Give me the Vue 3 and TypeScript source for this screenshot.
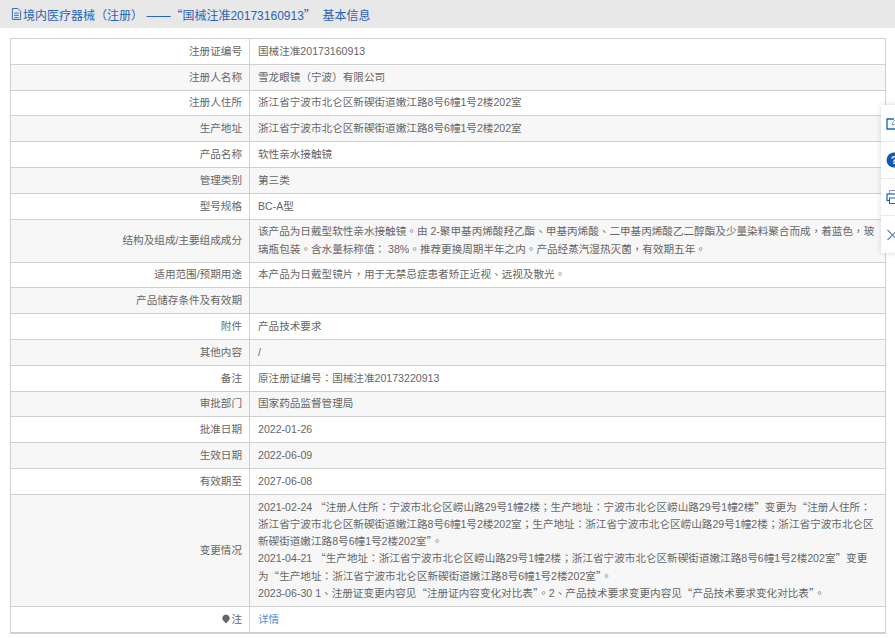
<script setup lang="ts">
interface Row { label: string; value?: string; lines?: string[]; link?: string; tip?: boolean }
const rows: Row[] = [
  { label: '注册证编号', value: '国械注准20173160913' },
  { label: '注册人名称', value: '雪龙眼镜（宁波）有限公司' },
  { label: '注册人住所', value: '浙江省宁波市北仑区新碶街道嫩江路8号6幢1号2楼202室' },
  { label: '生产地址', value: '浙江省宁波市北仑区新碶街道嫩江路8号6幢1号2楼202室' },
  { label: '产品名称', value: '软性亲水接触镜' },
  { label: '管理类别', value: '第三类' },
  { label: '型号规格', value: 'BC-A型' },
  { label: '结构及组成/主要组成成分', value: '该产品为日戴型软性亲水接触镜。由 2-聚甲基丙烯酸羟乙酯、甲基丙烯酸、二甲基丙烯酸乙二醇酯及少量染料聚合而成，着蓝色，玻璃瓶包装。含水量标称值： 38%。推荐更换周期半年之内。产品经蒸汽湿热灭菌，有效期五年。' },
  { label: '适用范围/预期用途', value: '本产品为日戴型镜片，用于无禁忌症患者矫正近视、远视及散光。' },
  { label: '产品储存条件及有效期', value: '' },
  { label: '附件', value: '产品技术要求' },
  { label: '其他内容', value: '/' },
  { label: '备注', value: '原注册证编号：国械注准20173220913' },
  { label: '审批部门', value: '国家药品监督管理局' },
  { label: '批准日期', value: '2022-01-26' },
  { label: '生效日期', value: '2022-06-09' },
  { label: '有效期至', value: '2027-06-08' },
  { label: '变更情况', lines: [
    '2021-02-24 “注册人住所：宁波市北仑区崂山路29号1幢2楼；生产地址：宁波市北仑区崂山路29号1幢2楼”变更为“注册人住所：浙江省宁波市北仑区新碶街道嫩江路8号6幢1号2楼202室；生产地址：浙江省宁波市北仑区崂山路29号1幢2楼；浙江省宁波市北仑区新碶街道嫩江路8号6幢1号2楼202室”。',
    '2021-04-21 “生产地址：浙江省宁波市北仑区崂山路29号1幢2楼；浙江省宁波市北仑区新碶街道嫩江路8号6幢1号2楼202室”变更为“生产地址：浙江省宁波市北仑区新碶街道嫩江路8号6幢1号2楼202室”。',
    '2023-06-30 1、注册证变更内容见“注册证内容变化对比表”。2、产品技术要求变更内容见“产品技术要求变化对比表”。',
  ] },
  { label: '注', link: '详情', tip: true },
]
const title = '境内医疗器械（注册） ——“国械注准20173160913”\u00a0 基本信息'
// Full-width punctuation is centred in the reference, which the TC cut of the font does.
const parts = (s: string): string[] => s.split(/([（）：；，。、“”])/).filter(Boolean)
const isPunct = (s: string): boolean => /^[（）：；，。、“”]$/.test(s)
</script>

<template>
  <div class="page">
    <div class="head">
      <svg class="doc" viewBox="0 0 12 13" width="11" height="12"><path d="M1.5.5h6l3 3v9h-9z M3.5 5.500h5 M3.500 8h5 M3.500 10.500h5" fill="none" stroke="#2a62b8" /></svg>
      <span><span v-for="(p, k) in parts(title)" :key="k" :class="{ punct: isPunct(p) }">{{ p }}</span></span>
    </div>
    <div class="info">
      <div v-for="(r, i) in rows" :key="r.label" class="row" :class="{ alt: i % 2 === 1 }">
        <div class="label">
          <svg v-if="r.tip" class="pin" viewBox="0 0 10 12" width="8" height="10"><path d="M5 .5a4.500 4.500 0 0 1 2.600 8.200L5 11.500 2.400 8.700A4.500 4.500 0 0 1 5 .5z" fill="#666" /></svg>{{ r.label }}
        </div>
        <div class="value">
          <a v-if="r.link" class="link">{{ r.link }}</a>
          <template v-else-if="r.lines">
            <div v-for="l in r.lines" :key="l"><span v-for="(p, k) in parts(l)" :key="k" :class="{ punct: isPunct(p) }">{{ p }}</span></div>
          </template>
          <template v-else><span v-for="(p, k) in parts(r.value ?? '')" :key="k" :class="{ punct: isPunct(p) }">{{ p }}</span></template>
        </div>
      </div>
    </div>
    <div class="tools">
      <div class="tool">
        <svg viewBox="0 0 16 16" width="16" height="16"><path d="M8 4H1v10h11V8" fill="none" stroke="#1565c0" stroke-width="1.300" /><path d="M6 10l.5-2.500L12 2l2 2-5.500 5.500z" fill="none" stroke="#8a93c8" /></svg>
      </div>
      <div class="tool">
        <svg viewBox="0 0 16 16" width="16" height="16"><circle cx="8" cy="8" r="7.500" fill="#1158b0" /><text x="8" y="12" text-anchor="middle" font-size="11" font-weight="700" fill="#fff" font-family="Liberation Sans">?</text></svg>
      </div>
      <div class="tool">
        <svg viewBox="0 0 16 16" width="16" height="16"><path d="M3.500 5V1.500h9V5" fill="none" stroke="#8a93c8" /><rect x="1" y="5" width="14" height="6.500" fill="none" stroke="#1565c0" stroke-width="1.200" /><rect x="3.500" y="9" width="9" height="5.500" fill="#fff" stroke="#1565c0" /></svg>
      </div>
      <div class="tool">
        <svg viewBox="0 0 16 16" width="16" height="16"><path d="M1.500 3l10 10M11.500 3l-10 10" fill="none" stroke="#5a7fc0" stroke-width="1.100" /></svg>
      </div>
    </div>
  </div>
</template>

<style scoped>
.page {
  position: relative;
  width: 895px;
  height: 638px;
  overflow: hidden;
  background: #fff;
  font-family: "Liberation Sans", "Noto Sans CJK SC", sans-serif;
  font-size: 10.6px;
  color: #666;
}
.punct { font-family: "Noto Sans CJK TC", sans-serif; line-height: 0; }
.head {
  height: 28px;
  background: #e8e8e8;
  padding-left: 11px;
  display: flex;
  align-items: center;
  gap: 1px;
  font-size: 12px;
  color: #2a62b8;
  margin-bottom: 10px;
}
.info {
  margin-left: 10px;
  width: 876px;
  box-sizing: border-box;
  border: 1px solid #d0d0d0;
  border-bottom-width: 2px;
}
.row {
  display: grid;
  grid-template-columns: 239px 1fr;
  border-bottom: 1px solid #d0d0d0;
  min-height: 24.800px;
}
.row:last-child { border-bottom: 0; }
.label, .value { line-height: 17.280px; padding: 3.760px 8px; }
.value { min-width: 0; }
.label {
  display: flex;
  align-items: center;
  justify-content: flex-end;
  padding-right: 7px;
  border-right: 1px solid #d0d0d0;
}
.alt .label, .alt .value { background: #f7f7f7; }
.pin { margin-right: 1px; }
.link { color: #4a90e2; }
.tools {
  position: absolute;
  left: 881px;
  top: 105px;
  width: 40px;
  background: #fff;
  box-shadow: 0 0 5px rgba(120, 130, 170, .3);
}
.tool {
  height: 36px;
  border-bottom: 1px solid #e8e8f0;
  padding-left: 5px;
  display: flex;
  align-items: center;
}
.tool:last-child { border-bottom: 0; height: 37px; }
</style>
